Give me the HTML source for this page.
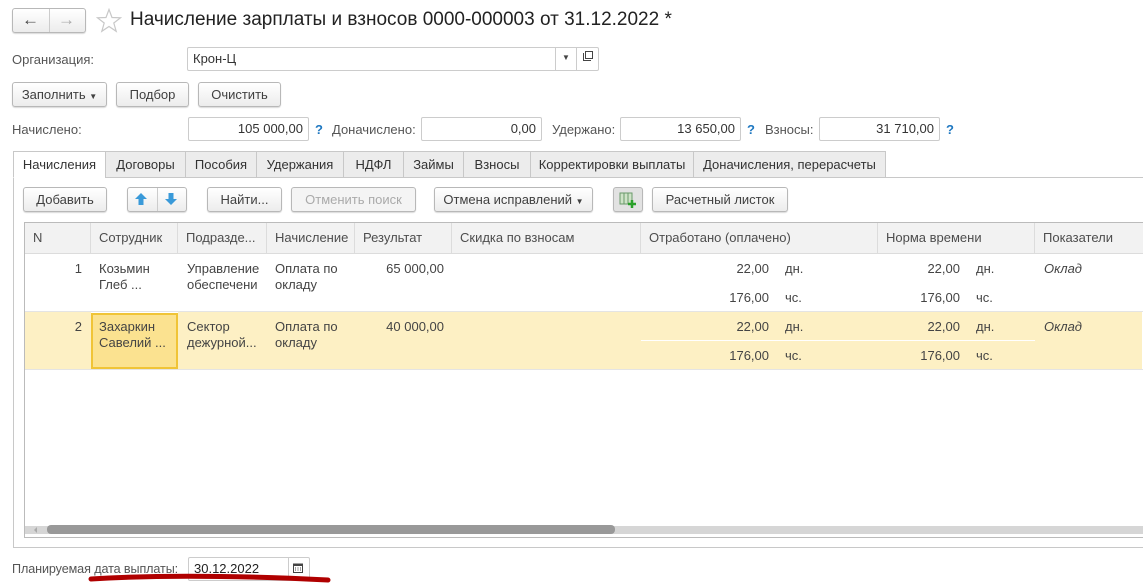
<!DOCTYPE html>
<html><head><meta charset="utf-8"><style>
*{box-sizing:border-box;margin:0;padding:0}
body{width:1143px;height:586px;background:#fff;position:relative;overflow:hidden;font-family:"Liberation Sans",Arial,sans-serif;font-size:13px;color:#333}
.a{position:absolute;white-space:nowrap}
.btn{position:absolute;height:25px;border:1px solid #b8b8b8;border-radius:3px;background:linear-gradient(#fff,#ececec);box-shadow:0 1px 1px rgba(0,0,0,.15);text-align:center;line-height:23px;color:#404040}
.inp{position:absolute;height:24px;border:1px solid #ccc;border-radius:2px;background:#fff;line-height:22px;padding:0 5px;color:#333}
.q{position:absolute;color:#1f78c1;font-weight:bold}
.tab{position:absolute;top:151px;height:27px;border:1px solid #c8c8c8;background:#ececec;line-height:25px;text-align:center;color:#333}
.hd{position:absolute;top:223px;height:31px;line-height:29px;padding-left:8px;border-right:1px solid #dcdcdc;border-bottom:1px solid #dcdcdc;background:#f2f2f2;color:#4d4d4d}
.c{position:absolute;line-height:16px;color:#444}
.y{position:absolute;background:#fdf0c4;border-right:1px solid #fff;border-bottom:1px solid #fff}
</style></head><body>
<div class="btn" style="left:12px;top:8px;width:74px;height:25px"></div>
<div class="a" style="left:49px;top:9px;width:1px;height:23px;background:#ccc"></div>
<div class="a" style="left:22px;top:10px;font-size:17px;color:#444;font-weight:bold">&#x2190;</div>
<div class="a" style="left:58px;top:10px;font-size:17px;color:#aaa;font-weight:bold">&#x2192;</div>
<svg class="a" style="left:96px;top:8px" width="26" height="25" viewBox="0 0 26 25"><polygon points="13,1.5 16,9.5 24.5,9.8 17.8,15 20.2,23.3 13,18.5 5.8,23.3 8.2,15 1.5,9.8 10,9.5" fill="none" stroke="#c8c8c8" stroke-width="1.2"/></svg>
<div class="a" style="left:130px;top:9px;font-size:19px;color:#222">Начисление зарплаты и взносов 0000-000003 от 31.12.2022 *</div>

<div class="a" style="left:12px;top:52px;color:#555">Организация:</div>
<div class="inp" style="left:187px;top:47px;width:412px">Крон-Ц</div>
<div class="a" style="left:555px;top:48px;width:1px;height:22px;background:#ccc"></div>
<div class="a" style="left:576px;top:48px;width:1px;height:22px;background:#ccc"></div>
<div class="a" style="left:562px;top:53px;font-size:8px;color:#444">&#x25BC;</div>
<div class="a" style="left:583px;top:53px;width:8px;height:8px;border:1.5px solid #444;border-top:none;border-right:none"></div>
<div class="a" style="left:585px;top:51px;width:8px;height:8px;border:1.5px solid #444"></div>

<div class="btn" style="left:12px;top:82px;width:95px">Заполнить <span style="font-size:8px">&#x25BC;</span></div>
<div class="btn" style="left:116px;top:82px;width:73px">Подбор</div>
<div class="btn" style="left:198px;top:82px;width:83px">Очистить</div>

<div class="a" style="left:12px;top:122px;color:#555">Начислено:</div>
<div class="inp" style="left:188px;top:117px;width:121px;text-align:right">105 000,00</div>
<div class="q" style="left:315px;top:122px">?</div>
<div class="a" style="left:332px;top:122px;color:#555">Доначислено:</div>
<div class="inp" style="left:421px;top:117px;width:121px;text-align:right">0,00</div>
<div class="a" style="left:552px;top:122px;color:#555">Удержано:</div>
<div class="inp" style="left:620px;top:117px;width:121px;text-align:right">13 650,00</div>
<div class="q" style="left:747px;top:122px">?</div>
<div class="a" style="left:765px;top:122px;color:#555">Взносы:</div>
<div class="inp" style="left:819px;top:117px;width:121px;text-align:right">31 710,00</div>
<div class="q" style="left:946px;top:122px">?</div>

<div class="a" style="left:13px;top:177px;width:1140px;height:371px;border:1px solid #c8c8c8"></div>
<div class="tab" style="left:13px;width:93px;background:#fff;border-bottom-color:#fff">Начисления</div>
<div class="tab" style="left:105px;width:81px">Договоры</div>
<div class="tab" style="left:185px;width:72px">Пособия</div>
<div class="tab" style="left:256px;width:88px">Удержания</div>
<div class="tab" style="left:343px;width:61px">НДФЛ</div>
<div class="tab" style="left:403px;width:61px">Займы</div>
<div class="tab" style="left:463px;width:68px">Взносы</div>
<div class="tab" style="left:530px;width:164px">Корректировки выплаты</div>
<div class="tab" style="left:693px;width:193px">Доначисления, перерасчеты</div>

<div class="btn" style="left:23px;top:187px;width:84px">Добавить</div>
<div class="btn" style="left:127px;top:187px;width:60px"></div>
<div class="a" style="left:157px;top:188px;width:1px;height:23px;background:#ccc"></div>
<svg class="a" style="left:134px;top:192px" width="14" height="14"><path d="M7 1 L13 7 H9.5 V13 H4.5 V7 H1 Z" fill="#3a9ad9"/></svg>
<svg class="a" style="left:164px;top:192px" width="14" height="14"><path d="M7 13 L13 7 H9.5 V1 H4.5 V7 H1 Z" fill="#3a9ad9"/></svg>
<div class="btn" style="left:207px;top:187px;width:75px">Найти...</div>
<div class="btn" style="left:291px;top:187px;width:125px;color:#aaa;background:#f4f4f4">Отменить поиск</div>
<div class="btn" style="left:434px;top:187px;width:159px">Отмена исправлений <span style="font-size:8px">&#x25BC;</span></div>
<div class="btn" style="left:613px;top:187px;width:30px;background:#e2e2e2"></div>
<svg class="a" style="left:619px;top:192px" width="18" height="16"><rect x="1" y="1" width="12" height="11" fill="#cfe3c8" stroke="#6a9a6a"/><path d="M5 1V12M9 1V12" stroke="#6a9a6a"/><path d="M13 8V16M9 12H17" stroke="#2aa02a" stroke-width="2.5"/></svg>
<div class="btn" style="left:652px;top:187px;width:136px">Расчетный листок</div>

<div class="a" style="left:24px;top:222px;width:1130px;height:316px;border:1px solid #bbb;border-right:none"></div>
<div class="hd" style="left:25px;width:66px">N</div>
<div class="hd" style="left:91px;width:87px">Сотрудник</div>
<div class="hd" style="left:178px;width:89px">Подразде...</div>
<div class="hd" style="left:267px;width:88px">Начисление</div>
<div class="hd" style="left:355px;width:97px">Результат</div>
<div class="hd" style="left:452px;width:189px">Скидка по взносам</div>
<div class="hd" style="left:641px;width:237px">Отработано (оплачено)</div>
<div class="hd" style="left:878px;width:157px">Норма времени</div>
<div class="hd" style="left:1035px;width:120px">Показатели</div>

<div class="c" style="left:25px;top:261px;width:57px;text-align:right">1</div>
<div class="c" style="left:99px;top:261px">Козьмин<br>Глеб ...</div>
<div class="c" style="left:187px;top:261px">Управление<br>обеспечени</div>
<div class="c" style="left:275px;top:261px">Оплата по<br>окладу</div>
<div class="c" style="left:355px;top:261px;width:89px;text-align:right">65 000,00</div>
<div class="c" style="left:641px;top:261px;width:128px;text-align:right">22,00</div>
<div class="c" style="left:785px;top:261px">дн.</div>
<div class="c" style="left:641px;top:290px;width:128px;text-align:right">176,00</div>
<div class="c" style="left:785px;top:290px">чс.</div>
<div class="c" style="left:878px;top:261px;width:82px;text-align:right">22,00</div>
<div class="c" style="left:976px;top:261px">дн.</div>
<div class="c" style="left:878px;top:290px;width:82px;text-align:right">176,00</div>
<div class="c" style="left:976px;top:290px">чс.</div>
<div class="c" style="left:1044px;top:261px;font-style:italic">Оклад</div>
<div class="a" style="left:25px;top:311px;width:1118px;height:1px;background:#e4e4e4"></div>

<div class="y" style="left:25px;top:312px;width:67px;height:58px"></div>
<div class="a" style="left:91px;top:313px;width:87px;height:56px;background:#fbe290;border:2px solid #f0c437"></div>
<div class="y" style="left:178px;top:312px;width:90px;height:58px"></div>
<div class="y" style="left:267px;top:312px;width:89px;height:58px"></div>
<div class="y" style="left:355px;top:312px;width:98px;height:58px"></div>
<div class="y" style="left:452px;top:312px;width:190px;height:58px"></div>
<div class="y" style="left:641px;top:312px;width:136px;height:29px"></div>
<div class="y" style="left:776px;top:312px;width:103px;height:29px"></div>
<div class="y" style="left:641px;top:341px;width:136px;height:29px"></div>
<div class="y" style="left:776px;top:341px;width:103px;height:29px"></div>
<div class="y" style="left:878px;top:312px;width:91px;height:29px"></div>
<div class="y" style="left:968px;top:312px;width:68px;height:29px"></div>
<div class="y" style="left:878px;top:341px;width:91px;height:29px"></div>
<div class="y" style="left:968px;top:341px;width:68px;height:29px"></div>
<div class="y" style="left:1035px;top:312px;width:108px;height:58px"></div>
<div class="c" style="left:25px;top:319px;width:57px;text-align:right">2</div>
<div class="c" style="left:99px;top:319px">Захаркин<br>Савелий ...</div>
<div class="c" style="left:187px;top:319px">Сектор<br>дежурной...</div>
<div class="c" style="left:275px;top:319px">Оплата по<br>окладу</div>
<div class="c" style="left:355px;top:319px;width:89px;text-align:right">40 000,00</div>
<div class="c" style="left:641px;top:319px;width:128px;text-align:right">22,00</div>
<div class="c" style="left:785px;top:319px">дн.</div>
<div class="c" style="left:641px;top:348px;width:128px;text-align:right">176,00</div>
<div class="c" style="left:785px;top:348px">чс.</div>
<div class="c" style="left:878px;top:319px;width:82px;text-align:right">22,00</div>
<div class="c" style="left:976px;top:319px">дн.</div>
<div class="c" style="left:878px;top:348px;width:82px;text-align:right">176,00</div>
<div class="c" style="left:976px;top:348px">чс.</div>
<div class="c" style="left:1044px;top:319px;font-style:italic">Оклад</div>
<div class="a" style="left:25px;top:369px;width:1118px;height:1px;background:#e4e4e4"></div>

<div class="a" style="left:25px;top:526px;width:1118px;height:8px;background:#d6d6d6"></div>
<div class="a" style="left:34px;top:527px;width:0;height:0;border:3px solid transparent;border-right-color:#aaa;border-left:none"></div>
<div class="a" style="left:47px;top:525px;width:568px;height:9px;background:#999;border-radius:4px"></div>

<div class="a" style="left:12px;top:562px;color:#555;font-size:12.6px;letter-spacing:-0.1px">Планируемая дата выплаты:</div>
<div class="inp" style="left:188px;top:557px;width:122px;color:#222">30.12.2022</div>
<div class="a" style="left:288px;top:558px;width:1px;height:22px;background:#ccc"></div>
<svg class="a" style="left:293px;top:563px" width="10" height="10"><rect x="0.5" y="1" width="9" height="8.5" fill="none" stroke="#444"/><rect x="0.5" y="1" width="9" height="2" fill="#444"/><path d="M2 5h1M4.5 5h1M7 5h1M2 7h1M4.5 7h1M7 7h1" stroke="#444"/></svg>
<svg class="a" style="left:85px;top:570px" width="250" height="16"><path d="M6 9 Q100 3 243 10" stroke="#b00000" stroke-width="5" fill="none" stroke-linecap="round"/></svg>
</body></html>
